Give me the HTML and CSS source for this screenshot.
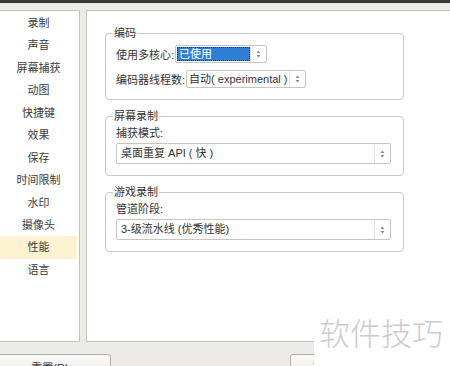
FILE: index.html
```html
<!DOCTYPE html>
<html lang="zh-CN">
<head>
  <meta charset="UTF-8">
  <title>性能设置</title>
  <link rel="stylesheet" href="styles.css">
</head>
<body>
  <div class="topbar"></div>
  <div class="main">
    <ul class="nav">
      <li>录制</li>
      <li>声音</li>
      <li>屏幕捕获</li>
      <li>动图</li>
      <li>快捷键</li>
      <li>效果</li>
      <li>保存</li>
      <li>时间限制</li>
      <li>水印</li>
      <li>摄像头</li>
      <li class="active">性能</li>
      <li>语言</li>
    </ul>

    <div class="content">
      <fieldset class="group">
        <legend>编码</legend>
        <div class="row">
          <span class="label">使用多核心:</span>
          <div class="combo combo-cores">
            <span class="combo-text selected">已使用</span>
            <span class="spin"><svg width="5" height="8" viewBox="0 0 5 8"><path d="M2.5 0.5 L4.5 3 L0.5 3 Z M0.5 5 L4.5 5 L2.5 7.5 Z" fill="#8a8a8a"/></svg></span>
          </div>
        </div>
        <div class="row">
          <span class="label">编码器线程数:</span>
          <div class="combo combo-threads">
            <span class="combo-text">自动( experimental )</span>
            <span class="spin"><svg width="5" height="8" viewBox="0 0 5 8"><path d="M2.5 0.5 L4.5 3 L0.5 3 Z M0.5 5 L4.5 5 L2.5 7.5 Z" fill="#8a8a8a"/></svg></span>
          </div>
        </div>
      </fieldset>

      <fieldset class="group group-wide">
        <legend>屏幕录制</legend>
        <div class="field-label">捕获模式:</div>
        <div class="combo combo-wide">
          <span class="combo-text">桌面重复 API ( 快 )</span>
          <span class="spin"><svg width="5" height="8" viewBox="0 0 5 8"><path d="M2.5 0.5 L4.5 3 L0.5 3 Z M0.5 5 L4.5 5 L2.5 7.5 Z" fill="#8a8a8a"/></svg></span>
        </div>
      </fieldset>

      <fieldset class="group group-wide">
        <legend>游戏录制</legend>
        <div class="field-label">管道阶段:</div>
        <div class="combo combo-wide">
          <span class="combo-text">3-级流水线 (优秀性能)</span>
          <span class="spin"><svg width="5" height="8" viewBox="0 0 5 8"><path d="M2.5 0.5 L4.5 3 L0.5 3 Z M0.5 5 L4.5 5 L2.5 7.5 Z" fill="#8a8a8a"/></svg></span>
        </div>
      </fieldset>
    </div>
  </div>

  <div class="footer">
    <button class="btn btn-reset">重置(R)</button>
    <button class="btn btn-ok">确定</button>
  </div>

  <div class="watermark">软件技巧</div>
</body>
</html>
```

FILE: styles.css
```css
* {
  box-sizing: border-box;
}

body {
  margin: 0;
  width: 450px;
  height: 366px;
  overflow: hidden;
  position: relative;
  background-color: #edebe8;
  font-family: "Liberation Sans", "Noto Sans CJK SC", sans-serif;
  font-size: 11px;
  color: #333333;
}

.topbar {
  height: 3px;
  background-color: #3a3935;
}

.main {
  display: flex;
  gap: 6px;
  margin-top: 7px;
  height: 332px;
}

/* lista lateral */
.nav {
  list-style: none;
  margin: 0;
  padding: 1px 2px 0 0;
  width: 80px;
  flex: none;
  background-color: #ffffff;
  border: 1px solid #c4c1bc;
  border-left: none;
}

.nav li {
  height: 22.45px;
  line-height: 22.45px;
  text-align: center;
  color: #3c3c3c;
}

.nav li.active {
  background-color: #fdf2cf;
}

/* panel derecho */
.content {
  flex: 1;
  margin-right: -20px;
  background-color: #ffffff;
  border: 1px solid #c4c1bc;
  padding: 15px 0 0 18px;
}

.group {
  width: 299px;
  margin: 0;
  padding: 0 12px 11px 10px;
  border: 1px solid #cac7c2;
  border-radius: 4px;
}

.group + .group {
  margin-top: 9px;
}

.group legend {
  padding: 0 1px;
  margin-left: -3px;
  line-height: 14px;
  color: #333333;
}

.row {
  display: flex;
  align-items: center;
  margin-top: 5px;
}

.row + .row {
  margin-top: 7px;
}

.label {
  white-space: nowrap;
  margin-right: 1px;
}

.field-label {
  margin-top: 3px;
  line-height: 14px;
}

.combo {
  display: flex;
  align-items: stretch;
  height: 18px;
  background-color: #ffffff;
  border: 1px solid #c8c5c0;
  border-radius: 2px;
}

.combo-text {
  flex: 1;
  padding: 0 3px;
  line-height: 16px;
  white-space: nowrap;
  overflow: hidden;
}

.combo-text.selected {
  margin: 1px 0 1px 1px;
  padding: 0 2px;
  line-height: 14px;
  background-color: #2f7fd6;
  color: #ffffff;
  outline: 1px dotted #0a3c7a;
  outline-offset: -1px;
}

.spin {
  width: 16px;
  flex: none;
  display: flex;
  align-items: center;
  justify-content: center;
  border-left: 1px solid #e2e0dc;
}

.combo-cores {
  width: 92px;
}

.combo-threads {
  width: 120px;
}

.combo-threads .combo-text {
  padding: 0 2px;
}

.combo-wide {
  height: 21px;
  margin-top: 3px;
}

.combo-wide .combo-text {
  line-height: 19px;
  padding-left: 4px;
}

/* botones */
.footer {
  display: flex;
  margin-top: 12px;
}

.btn {
  height: 26px;
  border: 1px solid #b3afa9;
  border-radius: 3px;
  background: linear-gradient(#fafaf9, #e9e7e4);
  font-family: inherit;
  font-size: 11px;
  color: #333333;
  padding: 2px 0 0;
  text-align: center;
  line-height: 14px;
}

.btn-reset {
  width: 122px;
  margin-left: -11px;
}

.btn-ok {
  width: 110px;
  margin-left: 179px;
  text-align: left;
  padding-left: 22px;
}

.watermark {
  position: absolute;
  left: 314px;
  top: 305px;
  width: 136px;
  height: 61px;
  background-color: #ffffff;
  color: #cccccc;
  font-family: "Noto Sans CJK SC", sans-serif;
  font-size: 31px;
  font-weight: 300;
  line-height: 40px;
  padding: 7px 0 0 5px;
}
```
